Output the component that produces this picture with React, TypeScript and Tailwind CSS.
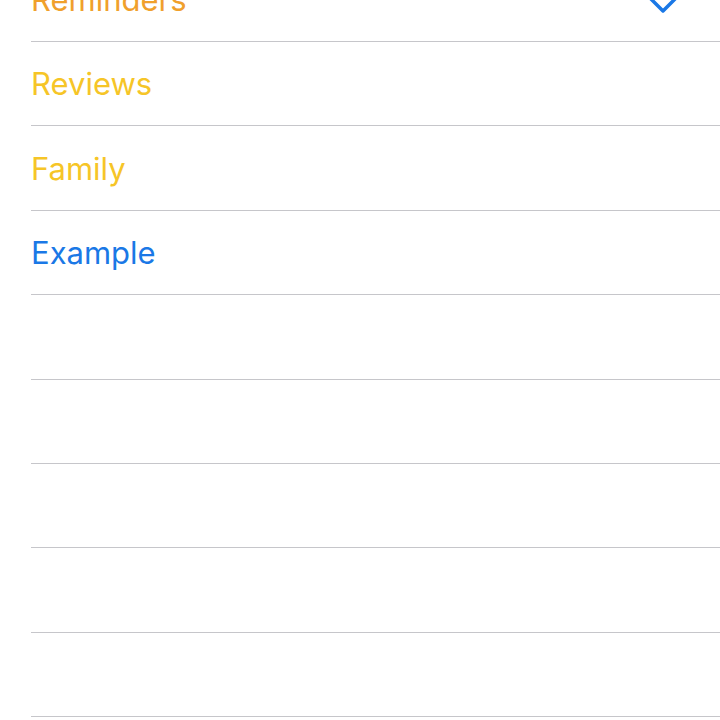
import React from "react";

const rows: { label: string; color: string }[] = [
  { label: "Reminders", color: "text-[#f0a02c]" },
  { label: "Reviews", color: "text-[#f6c527]" },
  { label: "Family", color: "text-[#f6c527]" },
  { label: "Example", color: "text-[#1a78e6]" },
  { label: "", color: "" },
  { label: "", color: "" },
  { label: "", color: "" },
  { label: "", color: "" },
  { label: "", color: "" },
];

export default function App() {
  return (
    <div className="w-[720px] h-[720px] overflow-hidden bg-white" style={{ fontFamily: "Inter, 'Noto Sans', sans-serif" }}>
      <div className="pl-[31px] -mt-[42.375px]">
        {rows.map((r, i) => (
          <div
            key={i}
            className="h-[84.375px] border-b border-[#c6c6ca] flex items-center justify-between"
          >
            <span className={`text-[31px] leading-none ${r.color}`}>{r.label}</span>
            {i === 0 && (
              <svg
                width="30"
                height="20"
                viewBox="0 0 30 20"
                className="self-end mb-[25px] mr-[42px]"
                fill="none"
                stroke="#1a78e6"
                strokeWidth="3.5"
                strokeLinecap="round"
                strokeLinejoin="round"
              >
                <path d="M3 3 L15 15 L27 3" />
              </svg>
            )}
          </div>
        ))}
      </div>
    </div>
  );
}
